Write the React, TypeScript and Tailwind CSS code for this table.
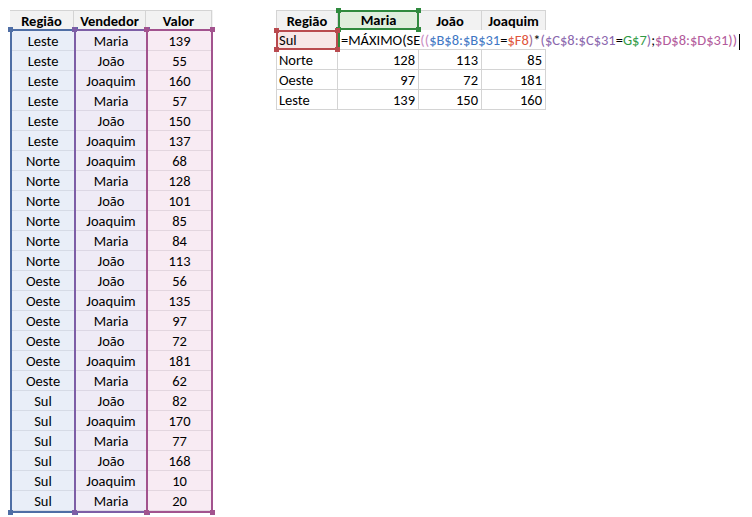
import React from "react";

const rows: [string, string, number][] = [
  ["Leste", "Maria", 139],
  ["Leste", "João", 55],
  ["Leste", "Joaquim", 160],
  ["Leste", "Maria", 57],
  ["Leste", "João", 150],
  ["Leste", "Joaquim", 137],
  ["Norte", "Joaquim", 68],
  ["Norte", "Maria", 128],
  ["Norte", "João", 101],
  ["Norte", "Joaquim", 85],
  ["Norte", "Maria", 84],
  ["Norte", "João", 113],
  ["Oeste", "João", 56],
  ["Oeste", "Joaquim", 135],
  ["Oeste", "Maria", 97],
  ["Oeste", "João", 72],
  ["Oeste", "Joaquim", 181],
  ["Oeste", "Maria", 62],
  ["Sul", "João", 82],
  ["Sul", "Joaquim", 170],
  ["Sul", "Maria", 77],
  ["Sul", "João", 168],
  ["Sul", "Joaquim", 10],
  ["Sul", "Maria", 20],
];

const summary: [string, number, number, number][] = [
  ["Norte", 128, 113, 85],
  ["Oeste", 97, 72, 181],
  ["Leste", 139, 150, 160],
];

// little square handles on the corners of a highlighted range
function Handles({ color }: { color: string }) {
  return (
    <>
      <span className={`absolute -top-[4px] -left-[4px] w-[5px] h-[5px] ${color}`} />
      <span className={`absolute -top-[4px] -right-[4px] w-[5px] h-[5px] ${color}`} />
      <span className={`absolute -bottom-[4px] -left-[4px] w-[5px] h-[5px] ${color}`} />
      <span className={`absolute -bottom-[4px] -right-[4px] w-[5px] h-[5px] ${color}`} />
    </>
  );
}

export default function App() {
  return (
    <div
      className="w-[752px] h-[517px] bg-white text-[14.5px] text-black flex items-start overflow-hidden"
      style={{ fontFamily: "Carlito, Lato, 'Liberation Sans', sans-serif" }}
    >
      {/* Source data */}
      <div className="mt-[10px] ml-[10px] flex flex-col">
        <div className="flex h-[19px] bg-[#f2f2f2] font-bold leading-[20px] text-center">
          <div className="w-[64px] border-t border-r border-[#d4d4d4]">Região</div>
          <div className="w-[72px] border-t border-r border-[#d4d4d4]">Vendedor</div>
          <div className="w-[66px] border-t border-r border-[#d4d4d4]">Valor</div>
        </div>
        <div className="flex">
          <div className="relative w-[64px] flex flex-col bg-[#e9eef8] border-2 border-r-0 border-[#4f6ea5]">
            {rows.map((r, i) => (
              <div key={i} className="h-[20px] leading-[20px] text-center border-b border-[#d6dbe6] last:border-b-0 last:h-[19px]">
                {r[0]}
              </div>
            ))}
            <Handles color="bg-[#4f6ea5]" />
          </div>
          <div className="relative w-[72px] flex flex-col bg-[#efebf6] border-2 border-r-0 border-[#7d5ea6]">
            {rows.map((r, i) => (
              <div key={i} className="h-[20px] leading-[20px] text-center border-b border-[#dcd7e4] last:border-b-0 last:h-[19px]">
                {r[1]}
              </div>
            ))}
            <Handles color="bg-[#7d5ea6]" />
          </div>
          <div className="relative w-[67px] flex flex-col bg-[#f8ebf3] border-2 border-[#a2538e]">
            {rows.map((r, i) => (
              <div key={i} className="h-[20px] leading-[20px] text-center border-b border-[#e3d6df] last:border-b-0 last:h-[19px]">
                {r[2]}
              </div>
            ))}
            <Handles color="bg-[#a2538e]" />
          </div>
        </div>
      </div>

      {/* Summary table */}
      <div className="mt-[10px] ml-[63px] flex flex-col w-[270px]">
        <div className="flex h-[20px] font-bold leading-[20px] text-center">
          <div className="w-[62px] bg-[#f2f2f2] border-t border-l border-r border-[#d4d4d4]">Região</div>
          <div className="relative w-[81px] bg-[#dfeedd] border-2 border-[#2f8a3e] leading-[16px]">
            Maria
            <Handles color="bg-[#2f8a3e]" />
          </div>
          <div className="w-[63px] bg-[#f2f2f2] border-t border-r border-[#d4d4d4]">João</div>
          <div className="w-[64px] bg-[#f2f2f2] border-t border-r border-[#d4d4d4]">Joaquim</div>
        </div>

        <div className="flex h-[20px] leading-[20px]">
          <div className="relative w-[62px] bg-[#f7e6e7] border-2 border-[#b94a4f] leading-[17px] pl-[1px]">
            Sul
            <Handles color="bg-[#b94a4f]" />
          </div>
          <div className="w-[208px] bg-white border-l-2 border-b border-[#2f8a3e] border-b-[#d4d4d4] whitespace-nowrap pl-[1px] leading-[20px]">
            <span>=MÁXIMO(SE</span>
            <span className="text-[#c98bc0]">((</span>
            <span className="text-[#3f77c4]">$B$8:$B$31</span>
            <span>=</span>
            <span className="text-[#e0553c]">$F8</span>
            <span className="text-[#9a6b8f]">)</span>
            <span>*</span>
            <span className="text-[#8a66ad]">(</span>
            <span className="text-[#8a66ad]">$C$8:$C$31</span>
            <span>=</span>
            <span className="text-[#2f9a45]">G$7</span>
            <span className="text-[#8a66ad]">)</span>
            <span>;</span>
            <span className="text-[#b25a9b]">$D$8:$D$31</span>
            <span className="text-[#b25a9b]">))</span>
            <span className="inline-block w-[1px] h-[16px] bg-black align-middle ml-[2px]" />
          </div>
        </div>

        {summary.map((r) => (
          <div key={r[0]} className="flex h-[20px] leading-[20px]">
            <div className="w-[62px] border-l border-r border-b border-[#d4d4d4] pl-[2px]">{r[0]}</div>
            <div className="w-[81px] border-r border-b border-[#d4d4d4] text-right pr-[3px]">{r[1]}</div>
            <div className="w-[63px] border-r border-b border-[#d4d4d4] text-right pr-[3px]">{r[2]}</div>
            <div className="w-[64px] border-r border-b border-[#d4d4d4] text-right pr-[3px]">{r[3]}</div>
          </div>
        ))}
      </div>
    </div>
  );
}
